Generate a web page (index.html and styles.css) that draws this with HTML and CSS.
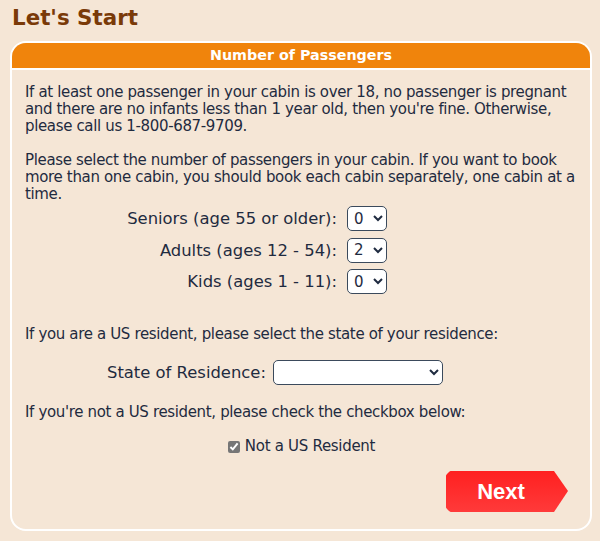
FILE: index.html
```html
<!DOCTYPE html>
<html lang="en">
<head>
<meta charset="utf-8">
<title>Let's Start</title>
<link rel="stylesheet" href="styles.css">
</head>
<body>
<h1 class="title">Let's Start</h1>
<section class="panel">
  <h2 class="panel-head">Number of Passengers</h2>
  <div class="panel-body">
    <p class="para">If at least one passenger in your cabin is over 18, no passenger is pregnant and there are no infants less than 1 year old, then you're fine. Otherwise, please call us 1-800-687-9709.</p>
    <p class="para">Please select the number of passengers in your cabin. If you want to book more than one cabin, you should book each cabin separately, one cabin at a time.</p>
    <div class="counts">
      <label class="count-label" for="seniors">Seniors (age 55 or older):</label>
      <select class="small-select" id="seniors"><option>0</option><option>1</option><option>2</option></select>
      <label class="count-label" for="adults">Adults (ages 12 - 54):</label>
      <select class="small-select" id="adults"><option>0</option><option>1</option><option selected>2</option></select>
      <label class="count-label" for="kids">Kids (ages 1 - 11):</label>
      <select class="small-select" id="kids"><option>0</option><option>1</option><option>2</option></select>
    </div>
    <p class="para">If you are a US resident, please select the state of your residence:</p>
    <div class="state-row">
      <label class="count-label" for="state">State of Residence:</label>
      <select class="state-select" id="state"><option></option></select>
    </div>
    <p class="para">If you're not a US resident, please check the checkbox below:</p>
    <div class="check-row">
      <input type="checkbox" class="check" id="nonus" checked>
      <label class="check-label" for="nonus">Not a US Resident</label>
    </div>
    <div class="actions">
      <button class="next" type="button">Next</button>
    </div>
  </div>
</section>
</body>
</html>
```

FILE: styles.css
```css
html, body {
  margin: 0;
  padding: 0;
  background: #f5e6d6;
}
body {
  padding: 5px 8px 0 10px;
  font-family: "DejaVu Sans", Verdana, sans-serif;
  color: #1f2b40;
}
.title {
  margin: 0 0 10px 2px;
  font-size: 21.4px;
  line-height: 26px;
  font-weight: bold;
  color: #7a3a08;
}
.panel {
  width: 582px;
  border: 2px solid #ffffff;
  border-radius: 16px;
  background: #f5e6d6;
  overflow: hidden;
  box-sizing: border-box;
}
.panel-head {
  margin: 0;
  background: #f0840c;
  color: #ffffff;
  font-size: 14.3px;
  font-weight: bold;
  line-height: 25px;
  text-align: center;
  border-bottom: 2px solid #ffffff;
}
.panel-body {
  padding: 14px 12px 17px 13px;
  font-size: 15px;
  line-height: 17px;
}
.para {
  margin: 0 0 17px 0;
  letter-spacing: -0.35px;
}
.counts {
  display: grid;
  grid-template-columns: 312px auto;
  justify-content: start;
  align-items: center;
  column-gap: 10px;
  row-gap: 6.5px;
  margin-top: -14px;
  margin-bottom: 32px;
}
.count-label {
  text-align: right;
  font-size: 16.4px;
  line-height: 17px;
}
.small-select, .state-select {
  font-family: "DejaVu Sans", Verdana, sans-serif;
  font-size: 15px;
  color: #1f2b40;
  height: 25px;
  box-sizing: border-box;
  border: 1.5px solid #3b4a5c;
  border-radius: 5px;
  background: #ffffff;
  padding: 0 2px;
}
.small-select {
  width: 40px;
}
.state-row {
  display: flex;
  align-items: center;
  gap: 7px;
  padding-left: 82px;
  margin: 6px 0 19px;
}
.state-select {
  width: 170px;
}
.check-row {
  display: flex;
  align-items: center;
  justify-content: center;
  gap: 5px;
  margin-top: 3px;
}
.check {
  width: 12px;
  height: 12px;
  margin: 0;
  accent-color: #767676;
}
.check-label {
  letter-spacing: -0.3px;
}
.actions {
  display: flex;
  justify-content: flex-end;
  margin-top: 16px;
  padding-right: 10px;
}
.next {
  width: 122px;
  height: 41px;
  border: none;
  font-family: "Liberation Sans", Arial, sans-serif;
  font-weight: bold;
  font-size: 22px;
  color: #ffffff;
  padding: 0 12px 0 0;
  background: linear-gradient(#ff2020, #ff3a3a);
  clip-path: polygon(4px 0, 108px 0, 122px 20px, 108px 41px, 4px 41px, 0 37px, 0 4px);
  border-radius: 5px 0 0 5px;
}
```
